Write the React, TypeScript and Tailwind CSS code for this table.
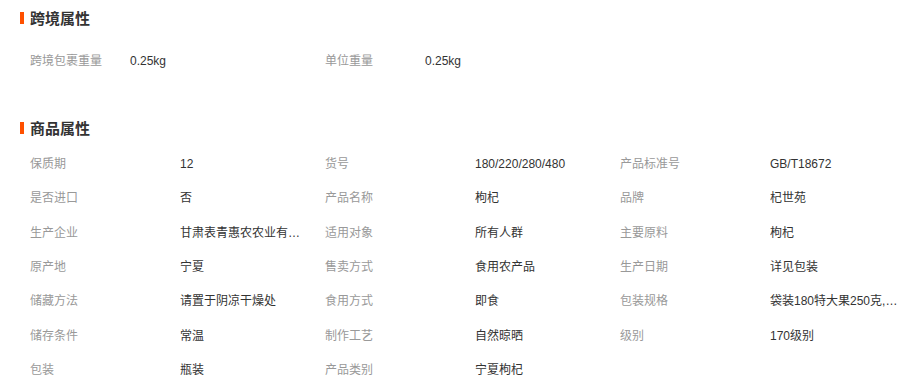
const crossBorder = [
  { label: "跨境包裹重量", value: "0.25kg" },
  { label: "单位重量", value: "0.25kg" },
];

const productAttrs = [
  { label: "保质期", value: "12" },
  { label: "货号", value: "180/220/280/480" },
  { label: "产品标准号", value: "GB/T18672" },
  { label: "是否进口", value: "否" },
  { label: "产品名称", value: "枸杞" },
  { label: "品牌", value: "杞世苑" },
  { label: "生产企业", value: "甘肃表青惠农农业有限公司" },
  { label: "适用对象", value: "所有人群" },
  { label: "主要原料", value: "枸杞" },
  { label: "原产地", value: "宁夏" },
  { label: "售卖方式", value: "食用农产品" },
  { label: "生产日期", value: "详见包装" },
  { label: "储藏方法", value: "请置于阴凉干燥处" },
  { label: "食用方式", value: "即食" },
  { label: "包装规格", value: "袋装180特大果250克,瓶装180特大果500克" },
  { label: "储存条件", value: "常温" },
  { label: "制作工艺", value: "自然晾晒" },
  { label: "级别", value: "170级别" },
  { label: "包装", value: "瓶装" },
  { label: "产品类别", value: "宁夏枸杞" },
];

function SectionTitle({ title }: { title: string }) {
  return (
    <div className="flex items-center h-[24px] pl-[20px]">
      <span className="w-[4px] h-[12px] bg-[#ff5000]" />
      <h3 className="ml-[6px] text-[15px] font-bold text-[#333] leading-none">
        {title}
      </h3>
    </div>
  );
}

export default function App() {
  return (
    <div
      className="w-[917px] h-[385px] bg-white overflow-hidden text-[12px]"
      style={{ fontFamily: '"Liberation Sans", "Noto Sans CJK SC", sans-serif' }}
    >
      <div className="pt-[6px]">
        <SectionTitle title="跨境属性" />
        <div className="grid grid-cols-[295px_295px_295px] pl-[30px] mt-[14px]">
          {crossBorder.map((item) => (
            <div key={item.label} className="flex items-center h-[34px]">
              <span className="w-[100px] text-[#999]">{item.label}</span>
              <span className="text-[#333]">{item.value}</span>
            </div>
          ))}
        </div>
      </div>

      <div className="mt-[38px]">
        <SectionTitle title="商品属性" />
        <div className="grid grid-cols-[295px_295px_295px] pl-[30px] mt-[7px]">
          {productAttrs.map((item) => (
            <div key={item.label} className="flex items-center h-[34.33px]">
              <span className="w-[150px] shrink-0 text-[#999]">{item.label}</span>
              <span className="w-[128px] truncate text-[#333]">{item.value}</span>
            </div>
          ))}
        </div>
      </div>
    </div>
  );
}
